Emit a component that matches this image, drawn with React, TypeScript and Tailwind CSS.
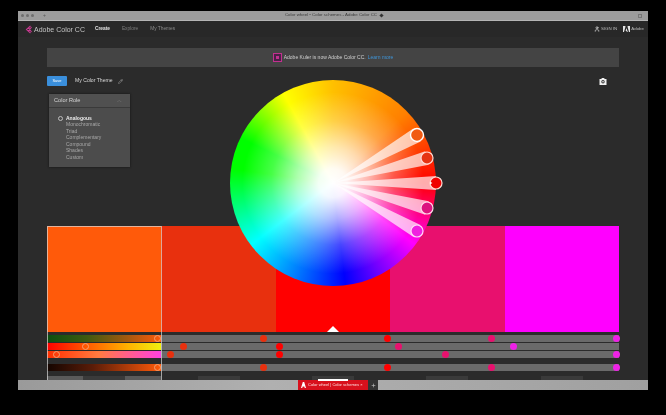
import { Pencil, Plus, User } from "lucide-react";

const sans = "font-['Liberation_Sans',Arial,sans-serif]";

const swatches = ["#ff5a0a", "#e8300e", "#ff0000", "#e8106e", "#ff00ff"];
const colorRules = ["Monochromatic", "Triad", "Complementary", "Compound", "Shades", "Custom"];

// dot x positions are measured from the left edge of the slider block
const sliderRows = [
  {
    gradient: "bg-[linear-gradient(90deg,#0a5010,#3f5a10_35%,#a2590e_70%,#ff5a0a)]",
    className: "mt-[3px] h-[7px]",
    first: 110,
    dots: [216, 340, 444, 569],
  },
  {
    gradient: "bg-[linear-gradient(90deg,#ff0000,#ff5a00_35%,#ffb000_70%,#f0f010)]",
    className: "mt-px h-[7px]",
    first: 38,
    dots: [136, 232, 351, 466],
  },
  {
    gradient: "bg-[linear-gradient(90deg,#ff3000,#ff7a40_45%,#ff40e0)]",
    className: "mt-px h-[7px]",
    first: 9,
    dots: [123, 232, 398, 569],
  },
  {
    gradient: "bg-[linear-gradient(90deg,#140500,#5a1c08_40%,#ff5a0a)]",
    className: "mt-[6px] h-[7px]",
    first: 110,
    dots: [216, 340, 444, 569],
  },
];

const handles = [
  { x: 84, y: -48, r: 6.5, color: "#f15a12", ring: "#fff", ringWidth: 1.4 },
  { x: 94, y: -25, r: 6, color: "#e63312", ring: "#ffd9d2", ringWidth: 1.2 },
  { x: 103, y: 0, r: 6, color: "#f00000", ring: "#ffd9d2", ringWidth: 1.2 },
  { x: 94, y: 25, r: 6, color: "#dc1480", ring: "#ffd9e8", ringWidth: 1.2 },
  { x: 84, y: 48, r: 6, color: "#f020e0", ring: "#ffd9f8", ringWidth: 1.2 },
];

function spoke(x: number, y: number, r: number) {
  const len = Math.hypot(x, y);
  const nx = (-y / len) * (r + 1);
  const ny = (x / len) * (r + 1);
  return `0,0 ${x + nx},${y + ny} ${x - nx},${y - ny}`;
}

function ColorWheel() {
  return (
    <div className="absolute left-[212px] top-[69px] h-[206px] w-[206px] rounded-full bg-[conic-gradient(from_0deg,#ffc000_0deg,#ff8000_46deg,#ff0000_90deg,#ff00ff_127deg,#0000ff_173deg,#00ffff_233deg,#00ff00_278deg,#00ff00_296deg,#ffff00_331deg,#ffc000_360deg)]">
      <div className="absolute inset-0 rounded-full bg-[radial-gradient(circle_closest-side,#ffffff_0%,rgba(255,255,255,0.95)_14%,rgba(255,255,255,0.68)_35%,rgba(255,255,255,0.28)_60%,rgba(255,255,255,0)_88%)]" />
      <svg className="absolute left-[103px] top-[103px] overflow-visible" width="1" height="1">
        {handles.map((h) => (
          <polygon key={h.y} points={spoke(h.x, h.y, h.r)} fill="#fff" fillOpacity="0.68" />
        ))}
        {handles.map((h) => (
          <circle key={h.y} cx={h.x} cy={h.y} r={h.r} fill={h.color} stroke={h.ring} strokeWidth={h.ringWidth} />
        ))}
        <path d="M97 -1.6 L99.4 0 L97 1.6 Z" fill="#fff" />
      </svg>
    </div>
  );
}

function TitleBar() {
  return (
    <div className="relative flex h-[10px] shrink-0 items-center border-b border-[#b5b5b5] bg-[#9c9c9c] px-[3px]">
      <div className="flex gap-[2px]">
        <span className="h-[3px] w-[3px] rounded-full bg-[#6e6e6e]" />
        <span className="h-[3px] w-[3px] rounded-full bg-[#6e6e6e]" />
        <span className="h-[3px] w-[3px] rounded-full bg-[#6e6e6e]" />
      </div>
      <span className="ml-[9px] text-[5px] leading-none text-[#555]">+</span>
      <span className="ml-[239px] text-[4.4px] leading-none text-[#3c3c3c]">
        Color wheel • Color schemes - Adobe Color CC
      </span>
      <span className="ml-[3px] h-[3px] w-[3px] rotate-45 bg-[#333]" />
      <span className="ml-auto mr-[3px] h-[4px] w-[4px] border border-[#777]" />
    </div>
  );
}

function NavBar() {
  return (
    <div className="flex h-[16px] shrink-0 items-center bg-[#282828] pl-[7px] pr-[4px]">
      <svg width="7" height="9" viewBox="0 0 7 9" fill="none" stroke="#c6398f" strokeWidth="1.1">
        <path d="M5.5 1 L1.5 4.5 L5.5 8 M3.5 2.8 L6.5 7 M3.5 6.2 L6.5 2" />
      </svg>
      <span className="ml-[2px] text-[7px] leading-none text-[#c4c4c4]">Adobe Color CC</span>
      <span className="ml-[10px] text-[4.8px] font-bold leading-none text-[#e2e2e2]">Create</span>
      <span className="ml-[12px] text-[4.8px] leading-none text-[#7d7d7d]">Explore</span>
      <span className="ml-[12px] text-[4.8px] leading-none text-[#8a8a8a]">My Themes</span>
      <div className="ml-auto flex items-center">
        <User size={6} strokeWidth={3} className="text-[#d0d0d0]" />
        <span className="ml-px text-[4.4px] leading-none text-[#b8b8b8]">SIGN IN</span>
        <svg className="ml-[6px]" width="7" height="6" viewBox="0 0 7 6" fill="#e4e4e4">
          <path d="M0 0 H2.4 V1 L1 6 H0 Z M4.6 0 H7 V6 H6 L4.6 1 Z M3.5 2 L4.8 6 H3.8 L3.5 5 H2.6 Z" />
        </svg>
        <span className="ml-px text-[4.4px] leading-none text-[#b8b8b8]">Adobe</span>
      </div>
    </div>
  );
}

function ColorRulePanel() {
  return (
    <div className="ml-[2px] mt-[8px] h-[73px] w-[81px] shrink-0 bg-[#4c4c4c] shadow-[0_0_2px_#111]">
      <div className="flex h-[14px] items-center justify-between border-b border-[#3a3a3a] bg-[#505050] pl-[5px] pr-[8px]">
        <span className="text-[5.6px] leading-none text-[#d4d4d4]">Color Role</span>
        <span className="text-[5px] leading-none text-[#8c8c8c]">︿</span>
      </div>
      <div className="pl-[9px] pt-[7px]">
        <div className="flex h-[6.5px] items-center">
          <span className="h-[5px] w-[5px] rounded-full border border-[#bdbdbd]" />
          <span className="ml-[3px] text-[5px] font-bold leading-none text-[#ececec]">Analogous</span>
        </div>
        {colorRules.map((rule) => (
          <div key={rule} className="flex h-[6.5px] items-center pl-[8px] text-[5px] leading-none text-[#a8a8a8]">
            {rule}
          </div>
        ))}
      </div>
    </div>
  );
}

function SliderRow({ row }: { row: (typeof sliderRows)[number] }) {
  return (
    <div className={`relative grid grid-cols-5 ${row.className}`}>
      <div className={row.gradient} />
      <div className="col-span-4 bg-[#6a6a6a]" />
      <span
        className="absolute top-0 h-[7px] w-[7px] rounded-full border border-[#f4a070]"
        style={{ left: row.first - 3 }}
      />
      {row.dots.map((x, i) => (
        <span
          key={x}
          className="absolute top-0 h-[7px] w-[7px] rounded-full"
          style={{ left: x - 3, backgroundColor: i === 3 ? "#ee22e6" : swatches[i + 1] }}
        />
      ))}
    </div>
  );
}

function Main() {
  return (
    <div className="relative flex min-h-0 flex-1 flex-col overflow-hidden bg-[#2b2b2b] pl-[29px] pr-[29px] pt-[11px]">
      <div className="flex h-[19px] shrink-0 items-center justify-center bg-[#444444]">
        <span className="flex h-[9px] w-[9px] items-center justify-center border border-[#c2308f] bg-[#4a2146]">
          <span className="h-[3px] w-[3px] bg-[#c2308f]" />
        </span>
        <span className="ml-[2px] text-[5px] leading-none text-[#cfcfcf]">Adobe Kuler is now Adobe Color CC.</span>
        <span className="ml-[2px] text-[5px] leading-none text-[#3f95d8]">Learn more</span>
      </div>

      <div className="mt-[9px] flex h-[10px] shrink-0 items-center">
        <button className="h-[10px] w-[20px] rounded-[1px] bg-[#3a8fdc] text-[4px] leading-none text-white">Save</button>
        <span className="ml-[8px] text-[5.1px] leading-none text-[#d8d8d8]">My Color Theme</span>
        <Pencil size={5} className="ml-[5px] text-[#bdbdbd]" />
        <svg className="ml-auto mr-[12px]" width="8" height="7" viewBox="0 0 8 7">
          <path d="M0.5 1 H2.2 L3 0 H5 L5.8 1 H7.5 V7 H0.5 Z" fill="#f0f0f0" />
          <circle cx="4" cy="3.8" r="1.7" fill="#333" />
          <circle cx="4" cy="3.8" r="0.8" fill="#f0f0f0" />
        </svg>
      </div>

      <ColorRulePanel />

      <div className="relative mt-[59px] grid h-[106px] shrink-0 grid-cols-5">
        {swatches.map((color) => (
          <div key={color} style={{ backgroundColor: color }} />
        ))}
        <span className="absolute bottom-0 left-[280px] h-0 w-0 border-x-[6px] border-b-[6px] border-x-transparent border-b-white" />
      </div>

      <div className="shrink-0">
        {sliderRows.map((row) => (
          <SliderRow key={row.gradient} row={row} />
        ))}
      </div>

      <div className="mt-[5px] grid h-[6px] shrink-0 grid-cols-5">
        {swatches.map((color, i) => (
          <div key={color} className={`flex justify-center ${i === 0 ? "bg-[#5a5a5a]" : ""}`}>
            <span className="h-full w-[42px] bg-[#3a3a3a]" />
          </div>
        ))}
      </div>

      {/* outline of the selected swatch column */}
      <div className="absolute bottom-0 left-[29px] top-[189px] w-[115px] border-x border-t border-[#d8d8d8]/70" />
    </div>
  );
}

function TabBar() {
  return (
    <div className="relative flex h-[10px] shrink-0 items-center justify-center bg-[linear-gradient(90deg,#9a9a9a,#b0b0b0_40%,#a0a0a0)] pl-[10px]">
      <span className="absolute left-[300px] top-[-1px] h-[2px] w-[30px] bg-white" />
      <div className="flex h-full w-[70px] items-center whitespace-nowrap bg-[#d8101c] pl-[3px]">
        <svg width="5" height="6" viewBox="0 0 5 6" fill="#fff" className="shrink-0">
          <path d="M1.8 0 H3.2 L5 6 H3.8 L3.3 4.4 H1.7 L1.2 6 H0 Z" />
        </svg>
        <span className="ml-[2px] text-[4px] leading-none text-[#ffe0e0]">Color wheel | Color schemes ×</span>
      </div>
      <div className="flex h-full w-[10px] items-center justify-center bg-[#333333]">
        <Plus size={5} strokeWidth={3} className="text-[#bdbdbd]" />
      </div>
    </div>
  );
}

export default function App() {
  return (
    <div className={`h-[415px] w-[666px] overflow-hidden bg-black pl-[18px] pt-[11px] ${sans}`}>
      <div className="relative flex h-[379px] w-[630px] flex-col blur-[0.35px]">
        <TitleBar />
        <NavBar />
        <Main />
        <TabBar />
        <ColorWheel />
      </div>
    </div>
  );
}
